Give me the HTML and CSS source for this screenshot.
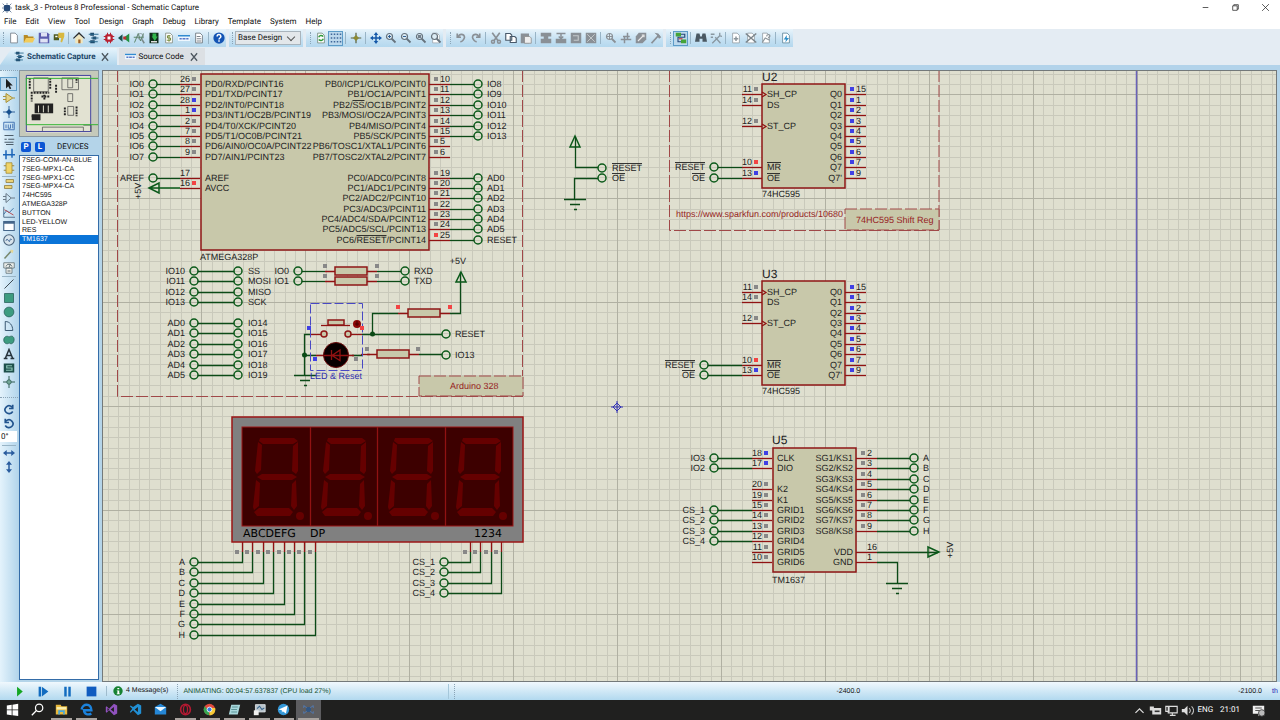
FILE: index.html
```html
<!DOCTYPE html>
<html lang="en">
<head>
<meta charset="utf-8">
<title>task_3 - Proteus 8 Professional - Schematic Capture</title>
<link rel="stylesheet" href="styles.css">
</head>
<body>
<div class="app">
  <header class="titlebar">
    <span class="app-icon" data-icon="chip"></span>
    <h1 class="title">task_3 - Proteus 8 Professional - Schematic Capture</h1>
    <div class="window-controls">
      <button aria-label="Minimize" data-icon="minimize"></button>
      <button aria-label="Restore" data-icon="restore"></button>
      <button aria-label="Close" data-icon="close"></button>
    </div>
  </header>
  <nav class="menubar">
    <button>File</button><button>Edit</button><button>View</button><button>Tool</button><button>Design</button><button>Graph</button><button>Debug</button><button>Library</button><button>Template</button><button>System</button><button>Help</button>
  </nav>
  <div class="toolbars">
    <div class="group" data-tools="new open save import | home schem pcb viewer bom green dollar source report | help"></div>
    <div class="group design"><select aria-label="Design"><option>Base Design</option></select></div>
    <div class="group" data-tools="refresh grid* | origin | pan zoomin zoomout zoomall zoomarea"></div>
    <div class="group" data-tools="undo redo | cut copy paste | blkcopy blkmove blkrot blkdel | pick make package hammer"></div>
    <div class="group" data-tools="wire* | find props | addsheet delsheet exit | erc"></div>
  </div>
  <div class="tabs">
    <div class="tab active"><span data-icon="schem"></span><button class="tab-name">Schematic Capture</button><button class="tab-close" aria-label="Close Schematic Capture" data-icon="cross"></button></div>
    <div class="tab"><span data-icon="source"></span><button class="tab-name">Source Code</button><button class="tab-close" aria-label="Close Source Code" data-icon="cross"></button></div>
  </div>
  <main class="workspace">
    <aside class="toolbox">
      <div class="stack" data-tools="select* component junction label script bus subcircuit | terminal pin graph tape generator probe meter | line box circle arc path text symbol marker"></div>
      <div class="stack rotate" data-tools="cw ccw"></div>
      <input class="angle" aria-label="Rotation angle" value="0°">
      <div class="stack" data-tools="| flipx flipy"></div>
    </aside>
    <aside class="side">
      <div class="overview"><svg id="overview" viewBox="0 0 80 66" preserveAspectRatio="none"></svg></div>
      <div class="devices-head"><button>P</button><button>L</button><h2>DEVICES</h2></div>
      <div class="device-list">
        <ul>
          <li>7SEG-COM-AN-BLUE</li><li>7SEG-MPX1-CA</li><li>7SEG-MPX1-CC</li><li>7SEG-MPX4-CA</li><li>74HC595</li><li>ATMEGA328P</li><li>BUTTON</li><li>LED-YELLOW</li><li>RES</li><li class="selected">TM1637</li>
        </ul>
      </div>
    </aside>
    <section class="canvas"><svg id="sheet" role="img" aria-label="Schematic sheet"></svg></section>
  </main>
  <footer class="statusbar">
    <div class="sim">
      <button aria-label="Run" data-icon="play"></button>
      <button aria-label="Step" data-icon="step"></button>
      <button aria-label="Pause" data-icon="pause"></button>
      <button aria-label="Stop" data-icon="stop"></button>
    </div>
    <button class="messages"><span data-icon="info"></span>4 Message(s)</button>
    <output class="animating">ANIMATING: 00:04:57.637837 (CPU load 27%)</output>
    <div class="coords"><span>-2400.0</span><span class="coord-y">-2100.0</span><span class="unit">th</span></div>
  </footer>
  <div class="taskbar">
    <div class="apps">
      <button aria-label="Start" data-icon="windows"></button>
      <button aria-label="Search" data-icon="search"></button>
      <button class="open" aria-label="Explorer" data-icon="explorer"></button>
      <button class="open" aria-label="Edge" data-icon="edge"></button>
      <button aria-label="Visual Studio" data-icon="vs"></button>
      <button aria-label="VS Code" data-icon="vscode"></button>
      <button aria-label="Mail" data-icon="mail"></button>
      <button class="open" aria-label="Opera" data-icon="opera"></button>
      <button class="open" aria-label="Chrome" data-icon="chrome"></button>
      <button class="open" aria-label="Notepad" data-icon="notepad"></button>
      <button class="open" aria-label="Monitor" data-icon="monitor"></button>
      <button class="open" aria-label="Telegram" data-icon="telegram"></button>
      <button class="open current" aria-label="Proteus" data-icon="proteus"></button>
    </div>
    <div class="tray">
      <button aria-label="Show hidden icons" data-icon="chevron"></button>
      <button aria-label="Battery" data-icon="battery"></button>
      <button aria-label="Network" data-icon="network"></button>
      <button aria-label="Volume" data-icon="volume"></button>
      <button>ENG</button>
      <button class="clock">21:01</button>
      <button class="notes" aria-label="Notifications" data-icon="notes"></button>
    </div>
  </div>
</div>
<script src="app.js"></script>
</body>
</html>
```

FILE: styles.css
```css
* { box-sizing: border-box; }
body { margin: 0; font-family: Roboto, "Open Sans", sans-serif; font-size: 8px; line-height: 10px; color: #111; text-rendering: geometricPrecision; }
button, input, select { font: inherit; color: inherit; border: 0; padding: 0; background: none; text-rendering: inherit; }
h1, h2, ul { margin: 0; padding: 0; font: inherit; list-style: none; }
svg { display: block; }
[data-icon] > svg { width: 13px; height: 13px; }

.app { display: flex; flex-direction: column; height: 100vh; min-height: 480px; overflow: hidden; background: #e4ecf3; }

.titlebar { display: flex; align-items: center; height: 15px; padding-left: 2px; gap: 3px; background: #fff; }
.app-icon > svg { width: 10px; height: 10px; }
.window-controls { display: flex; margin-left: auto; }
.window-controls button { display: grid; place-items: center; width: 30px; height: 14px; }
.window-controls svg { width: 9px; height: 9px; }

.menubar { display: flex; gap: 9px; height: 14px; padding-left: 4px; background: #fff; }
.menubar button { height: 13px; }

.toolbars { display: flex; gap: 3px; height: 18px; }
.group { display: flex; align-items: center; padding-left: 6px; background: linear-gradient(#e8f4fb, #c4e0f2 60%, #b4d8ee); }
.group::before { content: ""; width: 0; height: 12px; margin-right: 2px; margin-left: -2px; border-left: 1px dotted #8ba4b6; }
.group:first-child { padding-left: 5px; }
.tool { display: grid; place-items: center; width: 15px; height: 15px; }
.tool svg { width: 12px; height: 12px; }
.tool.on { background: #bcd8ec; border: 1px solid #5d9cc8; }
.sep { width: 1px; height: 12px; margin: 0 2px; background: #98b4c6; }
.design { position: relative; padding: 0 2px 0 5px; }
.design::after { content: ""; position: absolute; right: 9px; top: 5px; width: 5px; height: 5px; border: solid #555; border-width: 0 1px 1px 0; transform: rotate(45deg); pointer-events: none; }
.design select { appearance: none; width: 66px; height: 14px; padding-left: 2px; border: 1px solid #a9b4bc; border-radius: 0; background: #e3e7ea; }

.tabs { display: flex; align-items: flex-end; gap: 2px; height: 23px; border-bottom: 5px solid #b2d3ea; }
.tab { display: flex; align-items: center; gap: 2px; height: 17px; padding: 0 6px; background: #dce0e4; }
.tab.active { padding: 0 7px 0 14px; background: linear-gradient(#e6f4fc, #b2d6ec); clip-path: polygon(0 100%, 10% 0, 99% 0, 100% 5%, 100% 100%); color: #1c4668; font-weight: 700; }
.tab > span > svg { width: 11px; height: 11px; }
.tab-close { margin-left: 3px; }
.tab-close > svg { width: 10px; height: 10px; }

.workspace { display: flex; flex: 1; min-height: 0; padding-right: 3px; background: #b4d4e9; }
.toolbox { display: flex; flex-direction: column; width: 18px; padding-top: 6px; background: linear-gradient(90deg, #e4f3fc, #b4d6ec); border-top: 1px dotted #8ba4b6; }
.stack .tool { width: 17px; height: 14px; }
.stack .sep { width: 14px; height: 1px; margin: 1px 1px 0 2px; }
.rotate { margin-top: 8px; padding-top: 5px; border-top: 1px dotted #8ba4b6; }
.angle { width: 17px; height: 11px; margin: 0 0 2px; padding-left: 1px; background: #fff; }

.side { display: flex; flex-direction: column; width: 84px; padding: 0 3px 2px 1px; gap: 3px; }
.overview { height: 67px; border: 1px solid #8796a0; background: #c5c9ba; }
.overview svg { width: 100%; height: 100%; }
.devices-head { display: flex; align-items: center; gap: 4px; height: 13px; padding: 0 2px; }
.devices-head button { width: 10px; height: 10px; border-radius: 2px; background: #0b56d4; color: #fff; font-weight: 700; line-height: 10px; }
.devices-head h2 { margin-left: 8px; }
.device-list { flex: 1; margin-top: -1px; border: 1px solid #346ca8; background: #fff; font-family: "Liberation Sans", Arial, sans-serif; font-size: 7px; line-height: 9px; }
.device-list ul { display: grid; grid-auto-rows: 1fr; height: 88px; }
.device-list li { min-height: 0; padding: 1px 0 0 2px; line-height: 8px; white-space: nowrap; }
.device-list .selected { background: #0a74d8; color: #fff; }

.canvas { flex: 1; min-width: 0; border: 1px solid #73797a; background: #dfdfcf; }
#sheet { width: 100%; height: 100%; font-family: "Liberation Sans", Arial, sans-serif; font-size: 9px; fill: #222; }
.minor { stroke: #c9c9bb; fill: none; }
.major { stroke: #b0b0a2; fill: none; }
.wire { stroke: #0b4a16; stroke-width: 1.3; fill: none; }
.ring { stroke: #0b5a1a; stroke-width: 1.5; fill: none; }
.lead { stroke: #901212; stroke-width: 1.3; fill: none; }
.body { stroke: #8e1616; stroke-width: 1.5; fill: #c8c8aa; }
.zone { stroke: #a04848; stroke-dasharray: 12 3; fill: none; }
.tag { stroke: #a04848; stroke-dasharray: 12 3; fill: #c8c8aa; }
.note { fill: #962222; }
.ref { font-size: 12px; }
.over { text-decoration: overline; }
.seg-label { font: 11px "DejaVu Sans", sans-serif; fill: #000; }
.digit { fill: #650000; }

.statusbar { display: flex; align-items: center; height: 18px; background: linear-gradient(#f0f8fd, #b2d9ef); font-family: "Liberation Sans", Arial, sans-serif; font-size: 7px; }
.sim { display: flex; padding-left: 7px; }
.sim button { display: grid; place-items: center; width: 24px; }
.messages { display: flex; align-items: center; gap: 3px; margin-left: 3px; padding: 0 2px 0 6px; border-left: 1px solid #9fbccd; }
.messages svg { width: 10px; height: 10px; }
.animating { flex: 0 0 272px; margin-left: 7px; padding-left: 5px; border-left: 1px dotted #8ba4b6; border-right: 1px solid #a5c7da; color: #145030; line-height: 15px; }
.coords { display: flex; flex: 1; margin-left: 5px; padding-left: 381px; border-left: 1px dotted #8ba4b6; line-height: 15px; }
.coord-y { margin-left: auto; }
.unit { width: 8px; margin-left: 10px; color: #2222b4; }

.taskbar { display: flex; justify-content: space-between; height: 20px; background: #20201f; color: #fff; }
.apps { display: grid; grid-template-columns: repeat(13, 1fr); width: 321px; }
.apps button { display: grid; place-items: center; border-bottom: 2px solid transparent; }
.apps .open { border-image: linear-gradient(90deg, transparent 12%, #a9a39f 12%, #a9a39f 88%, transparent 88%) 1; border-bottom: 2px solid; }
.apps .current { background: #5d5d60; }
.tray { display: flex; align-items: center; gap: 3px; padding-right: 15px; }
.tray .clock { margin: 0 9px 0 4px; }
```

FILE: app.js
```js
const g = '#8a9096';
const fill = (c, d) => `<path fill="${c}" d="${d}"/>`;
const line = (c, d, w = 1.3) => `<path fill="none" stroke="${c}" stroke-width="${w}" d="${d}"/>`;
const lens = c => `<circle cx="6" cy="6" r="4" fill="#dcecf5" stroke="${c}" stroke-width="1.6"/>` + line(c, 'M9 9l5 5', 2.4);
const page = c => `<path fill="#fff" stroke="${c}" d="M3.500 1.500h6l3 3v10h-9z"/>`;

const icons = {
  chip: '<rect x="3" y="3" width="10" height="10" rx="2" fill="#274a78"/>' + line('#5a7290', 'M1 1l3 3M15 1l-3 3M1 15l3-3M15 15l-3-3M8 0v3M8 13v3M0 8h3M13 8h3'),
  minimize: line('#222', 'M3 8h10'),
  restore: line('#222', 'M3 5h8v8H3zM5 5V3h8v8h-2'),
  close: line('#222', 'M2 2l12 12M14 2L2 14'),
  cross: line('#4c565e', 'M3 2l10 12M13 2L3 14', 2),
  new: page('#68727c'),
  open: fill('#b88a24', 'M1 4h5l1 2h7v3H5l-3 5H1z') + fill('#f2cc5c', 'M4 8h12l-3 6H1z'),
  save: fill('#5b5cae', 'M1 1h12l2 2v12H1z') + fill('#dfe2f4', 'M4 1h8v5H4zM3 9h10v5H3z'),
  import: fill('#4c5a20', 'M1 3h7v8H1z') + fill('#d8b840', 'M7 1h8v5l-3 8-2-1 1-5H7z') + fill('#fff', 'M3 5h3v2H3z'),
  home: fill('#2c2c2c', 'M8 0l8 8-1 1-7-6-7 6-1-1z') + fill('#f1e6bc', 'M3 8l5-5 5 5v7H3z') + fill('#a06024', 'M7 10h3v5H7z'),
  schem: fill('#1d4566', 'M3 1h5v4H3zM6 6h5v4H6zM3 11h6v4H3z') + line('#2c6a8e', 'M1 3h13M4 8h10M1 13h12'),
  pcb: '<rect x="3" y="3" width="10" height="10" rx="2" fill="#b82030"/>' + line('#b82030', 'M1 6h14M1 10h14M6 1v14M10 1v14') + fill('#fff', 'M6 6h4v4H6z'),
  viewer: fill('#174f4c', 'M0 8l6-5v10z') + fill('#229040', 'M7 8l8-6v12z') + fill('#bc3030', 'M7 6h4v4H7z'),
  bom: line('#5a8468', 'M2 14L7 2l3 10 4-10M1 7h13') + '<circle cx="10" cy="6" r="4" fill="none" stroke="#7a8a8a"/>' + line('#7a8a8a', 'M12 10l3 5', 2),
  green: fill('#102c1c', 'M2 1h12v14H2z') + fill('#30b44c', 'M6 2h5v4h2l-4 6-4-6h1z') + fill('#dedede', 'M4 12h8v2H4z'),
  dollar: page('#7a8274') + line('#788c3c', 'M10 5H6v3h4v3H5M8 4v9'),
  source: fill('#eef7fe', 'M0 4h16v8H0z') + fill('#328bd0', 'M0 4h16v2H0z') + line('#5878c8', 'M2 9h3M6 9h4M11 9h3', 2),
  report: page('#5b646c') + line('#7a828a', 'M5 6h5M5 9h6M5 12h6'),
  help: '<circle cx="8" cy="8" r="7.500" fill="#1454b4"/>' + line('#fff', 'M5.500 6c0-4 5-3 5 0 0 2-2.500 2-2.500 4M8 11v2', 2),
  refresh: page('#6c8070') + line('#2c9838', 'M5 7c1-3 4-3 6-1M11 9c-1 3-4 3-6 1', 2),
  grid: fill('#3f6698', 'M1 2h2v2H1zM5 2h2v2H5zM9 2h2v2H9zM13 2h2v2h-2zM1 7h2v2H1zM5 7h2v2H5zM9 7h2v2H9zM13 7h2v2h-2zM1 12h2v2H1zM5 12h2v2H5zM9 12h2v2H9zM13 12h2v2h-2z'),
  origin: line('#565e3c', 'M8 1v14M1 8h14', 1.6) + fill('#8c8a34', 'M8 4l4 4-4 4-4-4z'),
  pan: fill('#1558a8', 'M8 0l3 4H9v3h3V5l4 3-4 3V9H9v3h2l-3 4-3-4h2V9H4v2L0 8l4-3v2h3V4H5z'),
  zoomin: lens('#66727c') + line('#2c5c90', 'M6 4v4M4 6h4'),
  zoomout: lens('#66727c') + line('#2c5c90', 'M4 6h4'),
  zoomall: lens('#66727c') + fill('#72808c', 'M4 4h4v4H4z'),
  zoomarea: page('#98a2aa') + lens('#66727c'),
  undo: line(g, 'M3 2v5h5M4 7c3-7 11-3 8 2-1 2-3 4-5 4', 2.200),
  redo: line(g, 'M13 2v5H8M12 7C9 0 1 4 4 9c1 2 3 4 5 4', 2.200),
  cut: line(g, 'M3 1l8 11M13 1L5 12', 2.200) + '<circle cx="4" cy="13" r="2" fill="none" stroke="#8a9096" stroke-width="2"/><circle cx="12" cy="13" r="2" fill="none" stroke="#8a9096" stroke-width="2"/>',
  copy: '<path fill="#fff" stroke="#48596a" stroke-width="1.500" d="M1 2h6l2 2v7H1zM7 6h6l2 2v6H7z"/>',
  paste: fill(g, 'M1 2h11v13H1z') + '<path fill="#eee" stroke="#888" d="M6 6h7l2 2v7H6z"/>',
  blkcopy: fill(g, 'M1 1h14v5h-4v3h4v6H1V9h4V6H1z'),
  blkmove: fill(g, 'M1 9h14v6H1z') + line(g, 'M2 2h12M8 2v7M5 6l3 3 3-3', 2),
  blkrot: fill(g, 'M1 1h14v14H1z') + line('#c4c8ca', 'M4 5h7v6H5', 1.500),
  blkdel: fill(g, 'M1 1h14v14H1z') + line('#c4c8ca', 'M3 3l10 10M13 3L3 13'),
  pick: lens(g) + line(g, 'M6 2v8M2 6h8'),
  make: line(g, 'M1 10h14M4 6h9M10 1v8M6 7v8', 2),
  package: fill(g, 'M5 1h10v9l-5 5H1V6z') + line('#e8e8e8', 'M4 12l7-7M9 4h3v3', 1.500),
  hammer: line(g, 'M2 15L12 4', 2.400) + fill(g, 'M6 1l5 1 4 5-3 2-3-5z'),
  wire: fill('#45a438', 'M1 1h7v5H1zM8 10h7v5H8z') + line('#254878', 'M8 3h5v4H4v6h4', 1.500) + line('#cc3a36', 'M5 9h5', 1.500),
  find: fill('#4a5862', 'M2 2h4l1 4h2l1-4h4l2 11h-6V9H6v4H0z'),
  props: line('#8997a0', 'M1 3h5M1 7h3M13 1v4l3 1M13 5L3 15M7 7l7 8', 1.700),
  addsheet: page('#8c969c') + line('#8c969c', 'M8 6v6M5 9h6', 2),
  delsheet: page('#8c969c') + line('#7c858b', 'M1 2l14 12M15 2L1 14', 2),
  exit: page('#8c969c') + line('#8c969c', 'M3 14l4-6 6 3M9 6c0-4 5-3 4 0l-2 2', 1.600),
  erc: page('#527c92') + fill('#2d8fc8', 'M9 4l-4 6h3l-1 4 5-6H9z'),
  select: fill('#1d1d1d', 'M4 1v13l3-3 2 4 2-1-2-4h4z'),
  component: fill('#e4d48a', 'M4 2l9 6-9 6z') + line('#a89138', 'M0 6h4M0 10h4M13 8h3M4 2l9 6-9 6z'),
  junction: line('#2e6098', 'M8 0v16M0 8h16') + fill('#16508e', 'M8 4l4 4-4 4-4-4z'),
  label: line('#4474b4', 'M1 3h14v10H1zM4 6v5M7 6v5h3V6M13 5v6'),
  script: line('#485866', 'M2 2h12M2 7h3M7 7h8M2 11h12M4 14h10'),
  bus: line('#1d66b8', 'M0 9h16M4 3v12M12 1v12', 2),
  subcircuit: '<path fill="#f0d468" stroke="#9c8634" d="M4 1h8v14H4z"/>' + line('#9c8634', 'M1 5h3M1 11h3M12 5h3M12 11h3'),
  terminal: '<path fill="#ead278" stroke="#8b7838" d="M4 2h10v4H4zM2 10h10v4H2z"/>',
  pin: line('#687886', 'M0 6h4M0 10h4M4 2l7 6-7 6zM11 8h5'),
  graph: line('#54708c', 'M1 1v14h15') + line('#3a6fa4', 'M1 11l4-5 3 3 6-6') + line('#b44a50', 'M2 5l12 7'),
  tape: '<path fill="#fff" stroke="#45668a" stroke-width="1.500" d="M1 2h14v12H1z"/>' + fill('#45668a', 'M1 2h14v3H1z'),
  generator: '<circle cx="8" cy="8" r="7" fill="#d8e4ec" stroke="#4a637c" stroke-width="1.500"/>' + line('#345c8c', 'M4 9c2-6 4 4 5 0s2-2 3-1'),
  probe: line('#79886c', 'M2 14L11 4', 2) + fill('#e2d69a', 'M10 2l4 1-1 4-3-2z'),
  meter: '<path fill="#eceeea" stroke="#58686e" d="M1 1h14v7H1zM4 8h8v7H4z"/>' + line('#58686e', 'M8 7l2-4M4 6c1-4 7-4 8 0M6 12h4'),
  line: line('#3c4850', 'M2 14L14 2'),
  box: '<path fill="#3d9c80" stroke="#265e58" d="M2 2h12v12H2z"/>',
  circle: '<circle cx="8" cy="8" r="6.500" fill="#3d9c80" stroke="#265e58"/>',
  arc: line('#395670', 'M3 14V2c6 0 10 5 10 12z'),
  path: '<path fill="#3d9c80" stroke="#265e58" d="M8 4c8-5 9 8 3 9-2 0-2-1-3-1-2 2-7 1-7-4s5-6 7-4z"/>',
  text: line('#26333c', 'M3 14L8 2l5 12M5 10h6M1 14h5M10 14h5', 2),
  symbol: fill('#1d4f4b', 'M1 2h14v12H1z') + line('#89c4b4', 'M12 5H5v3h7v3H4', 1.600),
  marker: line('#2e5a50', 'M8 0v16M0 8h16') + '<circle cx="8" cy="8" r="3" fill="#74a898" stroke="#2e5a50"/>',
  cw: line('#22548e', 'M12 4C6-1 0 7 4 11c3 3 7 2 9-1M13 1v5H8', 2.200),
  ccw: line('#22548e', 'M4 4c6-5 12 3 8 7-3 3-7 2-9-1M3 1v5h5', 2.200),
  flipx: fill('#2a5c9e', 'M0 8l5-4v3h6V4l5 4-5 4V9H5v3z'),
  flipy: fill('#2a5c9e', 'M8 0l4 5H9v6h3l-4 5-4-5h3V5H4z'),
  play: fill('#14a622', 'M5 2l7 6-7 6z'),
  step: fill('#126cc0', 'M2 2h3v12H2zM6 2l8 6-8 6z'),
  pause: fill('#126cc0', 'M4 2h3v12H4zM9 2h3v12H9z'),
  stop: fill('#105cc0', 'M2 2h12v12H2z'),
  info: '<circle cx="8" cy="8" r="7.500" fill="#168232"/>' + fill('#fff', 'M7 3h3v2H7zM6 7h4v5h1v1H6v-1h1V8H6z'),
  windows: fill('#fff', 'M1 3l6-1v6H1zM8 2l7-1v7H8zM1 9h6v6l-6-1zM8 9h7v7l-7-1z'),
  search: '<circle cx="10" cy="6" r="4.500" fill="none" stroke="#fff" stroke-width="1.500"/>' + line('#fff', 'M7 9l-6 6', 1.600),
  explorer: fill('#e9b83c', 'M1 2h6l1 2h7v10H1z') + fill('#faf0b0', 'M2 5h12v3H2z') + fill('#45a6dd', 'M4 9h8v5h-2v-3H6v3H4z'),
  edge: line('#1b82dc', 'M2 8c1-8 12-8 12 1H5c0 5 5 6 9 4', 3),
  vs: fill('#9152bf', 'M11 1l4 2v10l-4 2-6-6-3 3-1-1V5l1-1 3 3zM11 5L7 8l4 3zM3 6v4l2-2z'),
  vscode: fill('#218fd4', 'M11 1l4 2v10l-4 2-6-6-3 3-1-1 3-4-3-3 1-1 3 2zM11 5L7 8l4 3z'),
  mail: fill('#2587d6', 'M1 5l7-4 7 4v9H1z') + fill('#e9f6ff', 'M1 5h14L8 10z'),
  opera: '<ellipse cx="8" cy="8" rx="6" ry="6.500" fill="none" stroke="#b51932" stroke-width="2"/><ellipse cx="8" cy="8" rx="2.500" ry="5" fill="none" stroke="#b51932" stroke-width="1.500"/>',
  chrome: '<circle cx="8" cy="8" r="7" fill="#e14a3c"/>' + fill('#35a751', 'M2 4l5 6 1 5C2 15-1 9 2 4z') + fill('#f6c934', 'M9 6h6c1 5-2 9-7 9z') + '<circle cx="8" cy="8" r="3" fill="#377de4" stroke="#fff"/>',
  notepad: fill('#a9d8dc', 'M4 2h11l-3 12H1z') + line('#5c9496', 'M5 5h7M4 8h7M4 11h7'),
  monitor: '<path fill="#b8c4cc" stroke="#e4e9ec" d="M3 2h12v9H3z"/>' + fill('#f0f0ee', 'M1 9h6v6H1z') + line('#36638a', 'M5 7l3-3 3 4 3-2'),
  telegram: '<circle cx="8" cy="8" r="7" fill="#3498d8"/>' + fill('#fff', 'M2 8l11-5-2 10-4-3-1 2V9z'),
  proteus: fill('#315684', 'M5 5h6v6H5z') + line('#5373a0', 'M2 3l4 3M14 3l-4 3M2 13l4-3M14 13l-4-3M2 3v3M14 3v3M2 13v-3M14 13v-3', 1.300),
  chevron: line('#ddd', 'M3 11l5-5 5 5', 1.500),
  battery: fill('#dcdcdc', 'M4 5h11v8H4zM1 3h5v5H1z') + line('#333', 'M7 9h6', 2),
  network: line('#ddd', 'M4 3h11v8H4zM9 11v3M6 14h7M1 3h4v6H1z', 1.400),
  volume: fill('#ddd', 'M1 6h3l4-4v12l-4-4H1z') + line('#bbb', 'M10 5c2 2 2 4 0 6M13 3c3 3 3 7 0 10'),
  notes: fill('#eee', 'M1 2h14v10h-4l-3 3v-3H1z') + line('#555', 'M4 5h8M4 8h5') + '<circle cx="12" cy="11" r="4" fill="#bbb" stroke="#333"/>'
};

const svgIcon = name => `<svg viewBox="0 0 16 16" aria-hidden="true">${icons[name]}</svg>`;

document.querySelectorAll('[data-icon]').forEach(el => el.insertAdjacentHTML('afterbegin', svgIcon(el.dataset.icon)));
document.querySelectorAll('[data-tools]').forEach(el => {
  el.innerHTML = el.dataset.tools.split(' ').map(t => {
    if (t === '|') return '<div class="sep"></div>';
    const name = t.replace('*', '');
    return `<button class="tool${t.endsWith('*') ? ' on' : ''}" aria-label="${name}">${svgIcon(name)}</button>`;
  }).join('');
});

/* Sheet drawing. Rows are counted in grid steps from the first ATmega pin. */
const row = n => 84 + Math.round(n * 10.39);
const out = [];
const put = s => out.push(s);
const path = (cls, d) => put(`<path class="${cls}" d="${d}"/>`);
const h = (cls, x1, x2, y) => path(cls, `M${x1} ${y + 0.5}H${x2}`);
const rect = (cls, x, y, w, ht) => put(`<rect class="${cls}" x="${x}" y="${y}" width="${w}" height="${ht}"/>`);
const ring = (x, y) => put(`<circle class="ring" cx="${x}" cy="${y}" r="4"/>`);
const dot = (x, y, c) => put(`<rect x="${x - 2}" y="${y - 2}" width="4" height="4" fill="${{ g: '#888', b: '#4040e4', r: '#f24444' }[c]}"/>`);
/* A name wrapped in ~ is drawn with a bar over it. */
const text = (x, y, s, anchor = 'start', cls = '') => {
  const parts = s.replace(/&/g, '&amp;').replace(/~([^~]+)~/g, '<tspan class="over">$1</tspan>');
  put(`<text x="${x}" y="${y}" text-anchor="${anchor}" class="${cls}">${parts}</text>`);
};
const ground = (x, y) => path('wire', `M${x - 11} ${y + .5}h22M${x - 5} ${y + 5.5}h10M${x - 1} ${y + 10.5}h3`);
const resistor = (x, y) => { h('lead', x - 10, x + 42, y); rect('body', x, y - 4, 32, 8); };
const v5 = (x, y) => put(`<text transform="translate(${x} ${y}) rotate(-90)" text-anchor="middle">+5V</text>`);

function grid() {
  let minor = '', major = '';
  for (let i = -50; i < 140; i++) {
    const x = Math.round(617 + i * 10.39) + .5, y = Math.round(406 + i * 10.39) + .5;
    const d = `M${x} 0V2000`, e = `M0 ${y}H3000`;
    if (i % 10) minor += d + e; else major += d + e;
  }
  path('minor', minor);
  path('major', major);
}

function leftPin(edge, r, num, color, name) {
  const y = row(r);
  h('lead', edge - 20, edge, y);
  text(edge - 10, y - 2, num, 'end');
  if (color) dot(edge - 6, y - 5, color);
  text(edge + 5, y + 3, name);
}
function rightPin(edge, r, num, color, name) {
  const y = row(r);
  h('lead', edge, edge + 21, y);
  text(edge + 11, y - 2, num);
  if (color) dot(edge + 7, y - 5, color);
  text(edge - 3, y + 3, name, 'end');
}
function leftTerm(x, r, name, to) {
  const y = row(r);
  ring(x, y); h('wire', x + 4, to, y); text(x - 9, y + 3, name, 'end');
}
function rightTerm(x, r, name, from) {
  const y = row(r);
  ring(x, y); h('wire', from, x - 4, y); text(x + 9, y + 3, name);
}

grid();
put('<path d="M1136.500 0V2000" stroke="#6a62b8" stroke-width="1.500"/>');
path('zone', 'M117.500 70V396.500H523M522.500 70V396');
path('zone', 'M669.500 70V230.500H939M939 70V230');
rect('tag', 419, 376, 104, 20);
text(450, 389, 'Arduino 328', 'start', 'note');
rect('tag', 845, 209, 94, 21);
text(856, 223, '74HC595 Shift Reg', 'start', 'note');
text(843, 217, 'https://www.sparkfun.com/products/10680', 'end', 'note');

rect('body', 201, 74, 228, 176);
text(200, 260, 'ATMEGA328P');
[['26', 'g', 'PD0/RXD/PCINT16'], ['27', 'g', 'PD1/TXD/PCINT17'], ['28', 'b', 'PD2/INT0/PCINT18'], ['1', 'b', 'PD3/INT1/OC2B/PCINT19'],
 ['2', 'g', 'PD4/T0/XCK/PCINT20'], ['7', 'g', 'PD5/T1/OC0B/PCINT21'], ['8', 'g', 'PD6/AIN0/OC0A/PCINT22'], ['9', 'g', 'PD7/AIN1/PCINT23']]
  .forEach((p, i) => { leftPin(200, i, ...p); leftTerm(153, i, 'IO' + i, 180); });
leftPin(200, 9, '17', '', 'AREF');
leftTerm(153, 9, 'AREF', 180);
leftPin(200, 10, '16', 'r', 'AVCC');
path('ring', `M149 ${row(10)}l10 -5v10zM149 ${row(10)}H180`);
v5(141, 191);
[['10', 'g', 'PB0/ICP1/CLKO/PCINT0'], ['11', 'g', 'PB1/OC1A/PCINT1'], ['12', 'g', 'PB2/~SS~/OC1B/PCINT2'], ['13', 'g', 'PB3/MOSI/OC2A/PCINT3'],
 ['14', 'g', 'PB4/MISO/PCINT4'], ['15', 'g', 'PB5/SCK/PCINT5'], ['5', 'g', 'PB6/TOSC1/XTAL1/PCINT6'], ['6', 'g', 'PB7/TOSC2/XTAL2/PCINT7']]
  .forEach((p, i) => { rightPin(429, i, ...p); if (i < 6) rightTerm(478, i, 'IO' + (i + 8), 450); });
[['19', 'g', 'PC0/ADC0/PCINT8'], ['20', 'g', 'PC1/ADC1/PCINT9'], ['21', 'g', 'PC2/ADC2/PCINT10'], ['22', 'g', 'PC3/ADC3/PCINT11'],
 ['23', 'g', 'PC4/ADC4/SDA/PCINT12'], ['24', 'g', 'PC5/ADC5/SCL/PCINT13'], ['25', 'r', 'PC6/~RESET~/PCINT14']]
  .forEach((p, i) => { rightPin(429, i + 9, ...p); rightTerm(478, i + 9, i < 6 ? 'AD' + i : 'RESET', 450); });

const pair = (r, a, b) => { leftTerm(194, r, a, 234); ring(238, row(r)); text(248, row(r) + 3, b); };
['SS', 'MOSI', 'MISO', 'SCK'].forEach((s, i) => pair(18 + i, 'IO' + (10 + i), s));
for (let i = 0; i < 6; i++) pair(23 + i, 'AD' + i, 'IO' + (14 + i));

['RXD', 'TXD'].forEach((s, i) => {
  leftTerm(298, 18 + i, 'IO' + i, 325);
  resistor(335, row(18 + i));
  rightTerm(405, 18 + i, s, 377);
  dot(325, row(18 + i) - 5, 'g'); dot(377, row(18 + i) - 5, 'g');
});

/* Reset button and LED */
path('wire', 'M310 334.500H304.500V375M304 355.500H316M362 334.500H442M372.500 334V313.500H398M450 313.500H460.500V272M352 355.500H362M419 354.500H442');
path('ring', 'M461 272l5 10h-10z');
text(458, 264, '+5V', 'middle');
ground(305, 375);
resistor(408, 313);
resistor(377, 354);
h('lead', 310, 321, 334); h('lead', 351, 362, 334); h('lead', 361, 370, 354); h('lead', 316, 354, 355);
path('lead', 'M321 325.500H350');
rect('body', 328, 320, 16, 5);
put('<circle class="body" cx="324" cy="334" r="3"/><circle class="body" cx="348" cy="334" r="3"/>');
put('<circle cx="357" cy="324" r="4" fill="#8c0808"/><path d="M355 324h4M357 321v5" stroke="#400"/>');
put('<circle cx="336" cy="355" r="12.500" fill="#080000" stroke="#6c0a0a"/>');
path('lead', 'M324 355.500H348M331.500 350v10M340 350l-8 5.500 8 5z');
put('<circle cx="304.500" cy="355" r="2.500" fill="#0b4a16"/><circle cx="372.500" cy="334" r="2.500" fill="#0b4a16"/>');
put('<rect x="310.500" y="303.500" width="52" height="67" fill="none" stroke="#4848c4" stroke-dasharray="9 3"/>');
put('<text x="310" y="379" fill="#2c2cae">LED &amp; Reset</text>');
[[309, 328, 'b'], [362, 328, 'r'], [315, 359, 'b'], [356, 359, 'g'], [367, 349, 'g'], [418, 349, 'g'], [398, 307, 'r'], [450, 307, 'r']].forEach(p => dot(...p));
ring(446, 334); text(455, 337, 'RESET');
ring(446, 355); text(455, 358, 'IO13');

/* Enable pull-ups */
path('ring', 'M575 136l5 11h-10z');
path('wire', 'M575.500 137V167.500H598M598 178.500H574.500V199');
ring(602, 168); text(612, 171, '~RESET~');
ring(602, 178); text(612, 181, '~OE~');
ground(575, 199);

/* Shift registers */
function shiftRegister(ref, r, termX) {
  rect('body', 762, row(r - 1), 83, 104);
  text(762, row(r - 1) - 3, ref, 'start', 'ref');
  text(762, row(r + 9) + 9, '74HC595');
  [[0, '11', 'g', 'SH_CP'], [1, '14', 'g', 'DS'], [3, '12', 'g', 'ST_CP'], [7, '10', 'r', '~MR~'], [8, '13', 'b', '~OE~']]
    .forEach(([d, ...p]) => leftPin(762, r + d, ...p));
  [0, 3].forEach(d => path('lead', `M762 ${row(r + d) - 2}l4 2.500l-4 2.500`));
  ['15', '1', '2', '3', '4', '5', '6', '7', '9'].forEach((n, i) => rightPin(845, r + i, n, 'b', i < 8 ? 'Q' + i : "Q7'"));
  leftTerm(termX, r + 7, '~RESET~', 742);
  leftTerm(termX, r + 8, '~OE~', 742);
}
shiftRegister('U2', 1, 714);
shiftRegister('U3', 20, 704);

/* Display driver */
rect('body', 773, 448, 83, 124);
text(772, 444, 'U5', 'start', 'ref');
text(772, 583, 'TM1637');
[[36, '18', 'b', 'CLK'], [37, '17', 'b', 'DIO'], [39, '20', 'g', 'K2'], [40, '19', 'g', 'K1'], [41, '15', 'g', 'GRID1'], [42, '14', 'g', 'GRID2'],
 [43, '13', 'g', 'GRID3'], [44, '12', 'g', 'GRID4'], [45, '11', 'g', 'GRID5'], [46, '10', 'g', 'GRID6']].forEach(([r, ...p]) => leftPin(772, r, ...p));
leftTerm(714, 36, 'IO3', 752);
leftTerm(714, 37, 'IO2', 752);
for (let i = 0; i < 4; i++) leftTerm(714, 41 + i, 'CS_' + (i + 1), 752);
for (let i = 0; i < 8; i++) {
  rightPin(856, 36 + i, String(i + 2), 'g', `SG${i + 1}/KS${i + 1}`);
  rightTerm(914, 36 + i, 'ABCDEFGH'[i], 877);
}
rightPin(856, 45, '16', '', 'VDD');
rightPin(856, 46, '1', '', 'GND');
h('wire', 877, 938, row(45));
path('ring', 'M928 547v10l11-5z');
v5(953, 550);
path('wire', 'M877 562.500H897.500V583');
ground(897, 583);

/* Four-digit display */
put('<rect x="232" y="417" width="291" height="125" fill="#808080" stroke="#9c1616" stroke-width="1.500"/>');
put('<rect x="242" y="427" width="271" height="99" fill="#3d0000" stroke="#9c1616"/>');
path('lead', 'M310.500 427v99M377.500 427v99M445.500 427v99');
for (const x of [0, 68, 135, 203]) {
  put(`<g class="digit" transform="translate(${x} 0)"><path d="M260 438h34l4 3-5 3h-30l-4-3zM258 442l4 3-1 25-4 4-2-3zM298 442l-5 4-1 25 4 3 2-3zM257 477l5-3h30l5 3-5 3h-30zM256 480l4 3-1 23-5 4-1-3zM296 480l-4 4-1 22 3 4 3-4zM254 512l5-4h30l4 4-3 4h-33z"/><circle cx="300" cy="516" r="4"/></g>`);
}
text(243, 537, 'ABCDEFG', 'start', 'seg-label');
text(310, 537, 'DP', 'start', 'seg-label');
text(502, 537, '1234', 'end', 'seg-label');
function drop(x, r, termX, name) {
  path('lead', `M${x}.5 542V552`);
  path('wire', `M${x}.5 552V${row(r)}.5H${termX + 4}`);
  ring(termX, row(r));
  dot(x - 5, 552, 'g');
  text(termX - 9, row(r) + 3, name, 'end');
}
for (let i = 0; i < 8; i++) drop(242 + Math.round(i * 10.39), 46 + i, 194, 'ABCDEFGH'[i]);
for (let i = 0; i < 4; i++) drop(470 + Math.round(i * 10.39), 46 + i, 444, 'CS_' + (i + 1));

put('<path d="M617 401v12M611 407h12M617 403l4 4-4 4-4-4z" fill="none" stroke="#3434b8"/>');
document.getElementById('sheet').innerHTML = `<g transform="translate(-103 -71)">${out.join('')}</g>`;

/* Overview map */
document.getElementById('overview').innerHTML = `
<path fill="#e2e2d2" d="M6 4h67v59H6z"/>
<path fill="none" stroke="#3c3c9c" d="M6.500 4.500h66v57h-66z"/>
<path fill="none" stroke="#444" stroke-width=".7" d="M43 7h17v12H43zM14 7h15v14H14zM49 8h5v9h-5zM49 23h5v8h-5zM49 36h6v9h-6zM23 61V57h42v4M65 55h8v7"/>
<path stroke="#222" stroke-width="2" stroke-dasharray="2 1" fill="none" d="M10 7v11M31 7v11M11 22h19M22 26h9M12 24v7M25 24v6M37 14v8M46 37v8M58 36v10M58 8v4M12 46h9"/>
<path fill="#222" d="M15 33h19v10H15zM12 44h9v6h-9z"/>
<path stroke="#e2e2d2" fill="none" d="M19 35v7M24 35v7M29 35v7"/>
<path fill="none" stroke="#32b432" d="M6 7.500h74M6 54.500h74M6.500 7v47"/>`;
```
